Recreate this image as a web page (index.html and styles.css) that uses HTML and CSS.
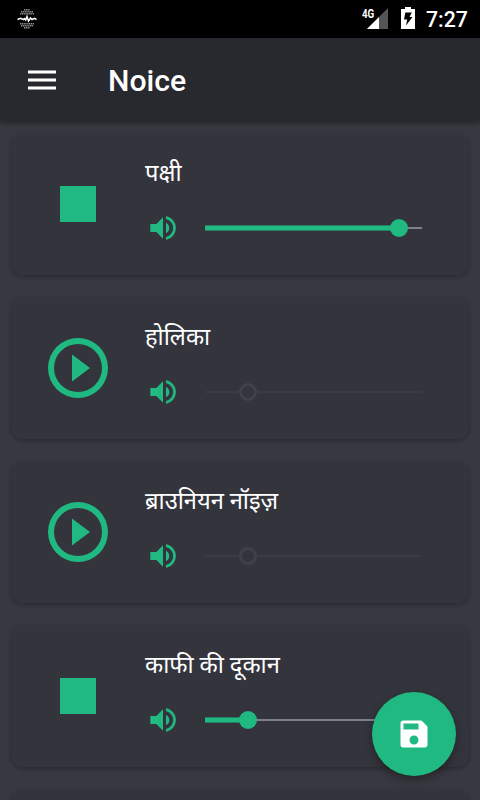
FILE: index.html
```html
<!DOCTYPE html>
<html lang="hi">
<head>
<meta charset="utf-8">
<title>Noice</title>
<link rel="stylesheet" href="styles.css">
</head>
<body>
<svg class="defs" aria-hidden="true">
  <symbol id="volume" viewBox="0 0 36 36"><path d="M5.300 14v8h6l6.700 6.800V7.200L11.300 14zM21 12.700v10.600c2-1 3.300-3 3.300-5.300s-1.300-4.300-3.300-5.300zM21 6.100v3a9.100 9.100 0 0 1 0 17.800v3a12.100 12.100 0 0 0 0-23.800z"/></symbol>
  <symbol id="play" viewBox="0 0 24 24"><path d="M10 16.5l6-4.5-6-4.5v9zM12 2a10 10 0 1 0 0 20 10 10 0 0 0 0-20zm0 18a8 8 0 1 1 0-16 8 8 0 0 1 0 16z"/></symbol>
  <symbol id="stop" viewBox="0 0 24 24"><path d="M6 6h12v12H6z"/></symbol>
</svg>
<div class="screen">
  <div class="status">
    <svg class="notice" width="20" height="22" viewBox="0 0 20 22">
      <g stroke="#8c8c8c" stroke-width="1.5" stroke-dasharray="1.300 .5"><path d="M7 1.800h6M4 3.800h12M3 5.800h14M3 15.800h14M4 17.800h12M7 19.800h6"/></g>
      <path d="M.5 11.500l3-1.300 3 1.300 1-1 1.200 1.500L10 8.500l1.500 4.500 2-3 1.500 1.500 2.500-1.200 2 1.200" fill="none" stroke="#fff" stroke-width="1.500"/>
    </svg>
    <span class="net">4G</span>
    <svg class="signal" width="22" height="21" viewBox="0 0 22 21"><path d="M22 0v21H1z" fill="#555"/><path d="M13 9v12H1z" fill="#fff"/></svg>
    <svg class="battery" width="14" height="22" viewBox="0 0 14 22"><path d="M4 0h6v2h4v20H0V2h4z" fill="#fff"/><path d="M4.300 5.500h6.500L8.500 10h3L5 18.500 6.200 12.500H3z" fill="#000"/></svg>
    <span class="time">7:27</span>
  </div>
  <header class="bar">
    <div class="menu"><i></i><i></i><i></i></div>
    <h1>Noice</h1>
  </header>
  <main class="list">
    <section class="card">
      <svg class="action"><use href="#stop"/></svg>
      <div class="body"><h2>पक्षी</h2>
        <div class="volume"><svg class="speaker"><use href="#volume"/></svg>
          <div class="slider"><div class="fill" style="width:194px"></div><div class="thumb"></div><div class="rest"></div></div></div></div>
    </section>
    <section class="card">
      <svg class="action"><use href="#play"/></svg>
      <div class="body"><h2>होलिका</h2>
        <div class="volume"><svg class="speaker"><use href="#volume"/></svg>
          <div class="slider off"><div class="fill" style="width:43px"></div><div class="thumb"></div><div class="rest"></div></div></div></div>
    </section>
    <section class="card">
      <svg class="action"><use href="#play"/></svg>
      <div class="body"><h2>ब्राउनियन नॉइज़</h2>
        <div class="volume"><svg class="speaker"><use href="#volume"/></svg>
          <div class="slider off"><div class="fill" style="width:43px"></div><div class="thumb"></div><div class="rest"></div></div></div></div>
    </section>
    <section class="card">
      <svg class="action"><use href="#stop"/></svg>
      <div class="body"><h2>काफी की दूकान</h2>
        <div class="volume"><svg class="speaker"><use href="#volume"/></svg>
          <div class="slider"><div class="fill" style="width:43px"></div><div class="thumb"></div><div class="rest"></div></div></div></div>
    </section>
    <section class="card"></section>
  </main>
  <button class="fab" aria-label="Save"><svg viewBox="0 0 24 24"><path d="M17 3H5a2 2 0 0 0-2 2v14a2 2 0 0 0 2 2h14a2 2 0 0 0 2-2V7l-4-4zm-5 16a3 3 0 1 1 0-6 3 3 0 0 1 0 6zm3-10H5V5h10v4z"/></svg></button>
</div>
</body>
</html>
```
FILE: styles.css
```css
* { box-sizing: border-box; }
body { margin: 0; background: #383841; font-family: Roboto, "Noto Sans", sans-serif; color: #fff; }
h1, h2 { margin: 0; }
.defs { position: absolute; width: 0; height: 0; }
.screen { position: relative; height: 800px; overflow: hidden; display: flex; flex-direction: column; }
.status { flex: none; height: 38px; background: #000; display: flex; align-items: flex-start; padding: 8px 12px 0 17px; }
.notice { margin-right: auto; }
.net { font: 700 12.5px/12px Roboto, sans-serif; width: 12px; transform: scaleX(.78); transform-origin: 0 0; margin-right: -8px; }
.signal { margin-right: 13px; }
.battery { margin: -1px 11px 0 0; }
.time { font-size: 21.3px; line-height: 24px; font-weight: 500; width: 42px; white-space: nowrap; }
.bar { flex: none; height: 83px; background: #28282f; display: flex; align-items: center; padding-left: 28px; box-shadow: 0 2px 5px rgba(0,0,0,.4); z-index: 1; }
.menu { width: 28px; display: grid; gap: 4px; margin-right: 52px; }
.menu i { height: 4px; background: linear-gradient(#96969a 1px, #fff 1px 3px, #96969a 3px); }
h1 { font-size: 30.2px; font-weight: 500; line-height: 36px; padding-top: 3px; }
.list { padding: 12px 11px 0; display: grid; gap: 22px; }
.card { height: 142px; border-radius: 12px; background: #34343d; box-shadow: 0 2px 4px rgba(0,0,0,.25); display: flex; align-items: center; padding-left: 31px; }
.action { width: 72px; height: 72px; fill: #20b981; margin-right: 31px; }
.body { height: 142px; padding-top: 22px; }
h2 { font-size: 23.7px; font-weight: 400; line-height: 36px; height: 36px; white-space: nowrap; }
.volume { display: flex; align-items: center; height: 36px; margin-top: 19px; }
.speaker { width: 36px; height: 36px; fill: #20b981; margin-right: 24px; }
.slider { width: 217px; display: flex; align-items: center; }
.fill { height: 6px; margin-right: -9px; background: linear-gradient(#287d63 1px, #20b981 1px 5px, #287d63 5px); }
.thumb { width: 18px; height: 18px; border-radius: 50%; background: #20b981; }
.rest { flex: 1; height: 2px; background: #817f87; }
.off .fill { height: 2px; border-right: 9px solid transparent; background: #3b3b43; background-clip: padding-box; }
.off .thumb { background: none; border: 3px solid #41414a; }
.off .rest { background: #3b3b43; }
.fab { position: absolute; left: 372px; top: 692px; z-index: 2; width: 84px; height: 84px; border: 0; border-radius: 50%; background: #20b981; display: grid; place-items: center; padding: 0; box-shadow: 0 4px 8px rgba(0,0,0,.35); }
.fab svg { width: 36px; height: 36px; fill: #fff; }
```
